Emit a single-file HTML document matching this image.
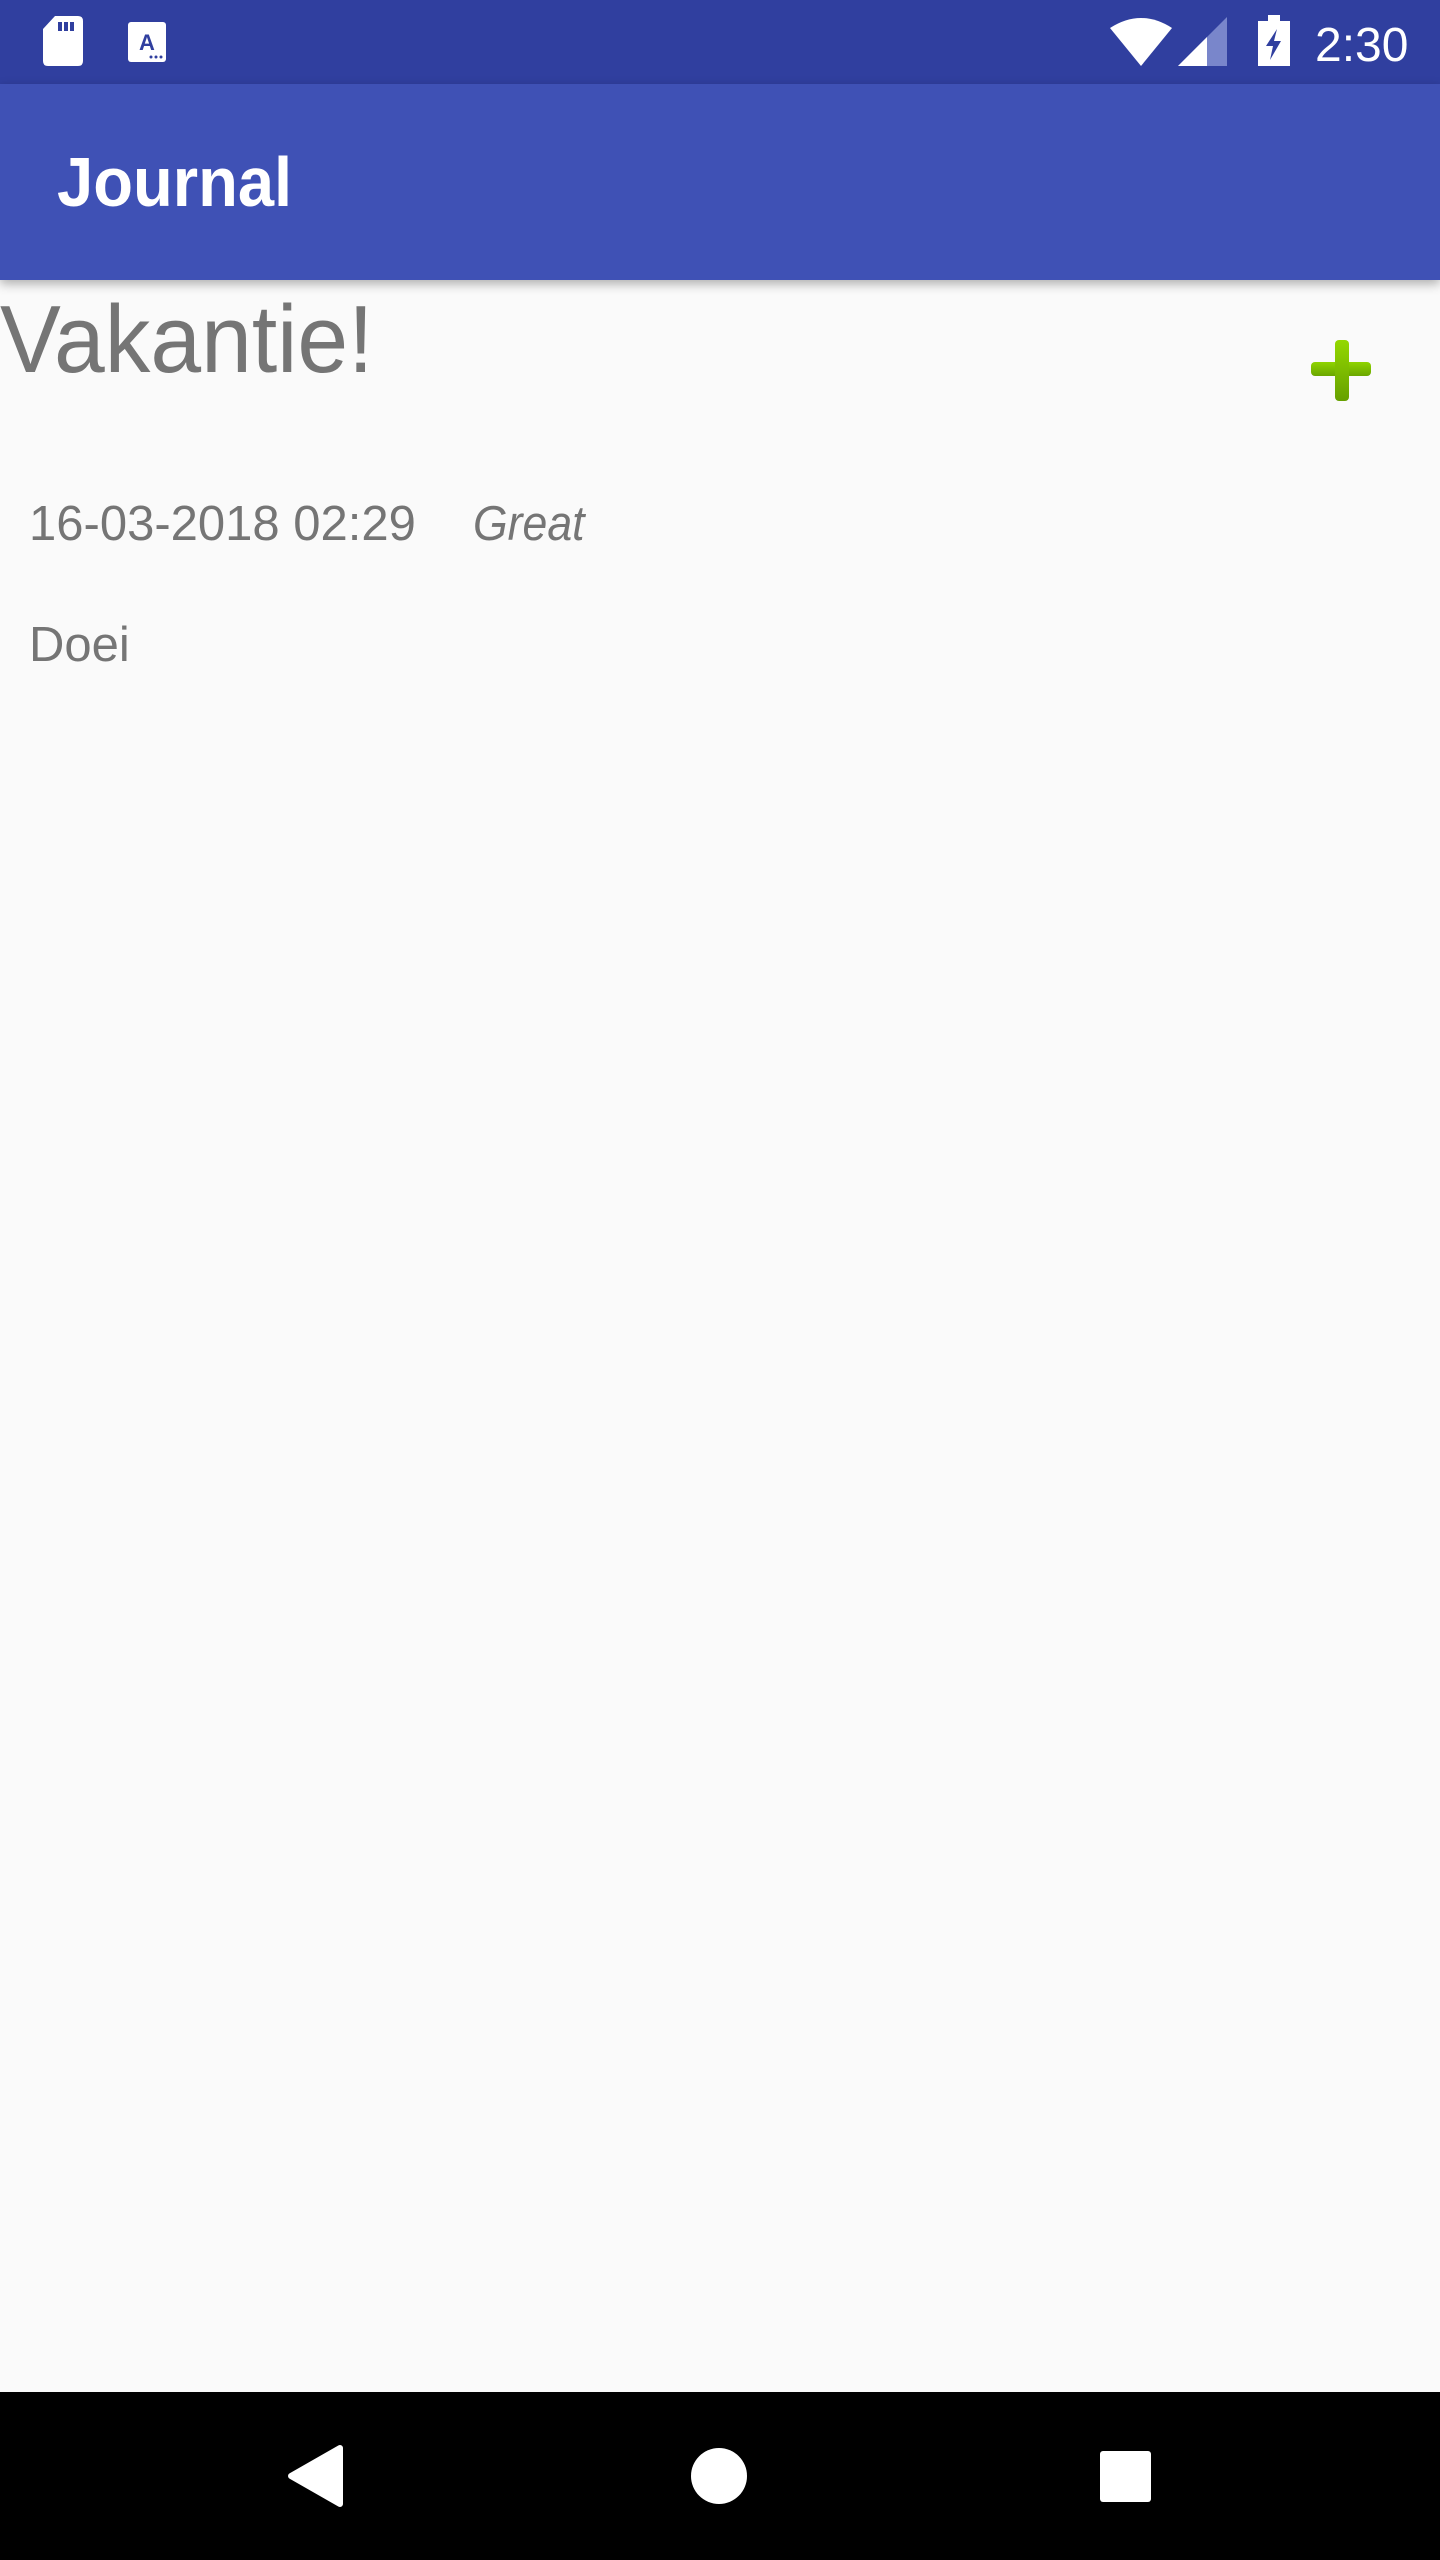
<!DOCTYPE html>
<html><head><meta charset="utf-8"><style>
*{margin:0;padding:0;box-sizing:border-box}
body{width:1440px;height:2560px;background:#fafafa;position:relative;overflow:hidden;font-family:"Liberation Sans",sans-serif}
.sb{position:absolute;left:0;top:0;width:1440px;height:84px;background:#303f9f}
.ab{position:absolute;left:0;top:84px;width:1440px;height:196px;background:#3f51b5;box-shadow:0 4px 10px rgba(0,0,0,.3)}
.ab span{position:absolute;left:57px;top:58px;font-size:70px;font-weight:bold;color:#fff;line-height:80px;transform:scaleX(.93);transform-origin:left}
.t{position:absolute;color:#757575;white-space:nowrap}
.nav{position:absolute;left:0;top:2392px;width:1440px;height:168px;background:#000}
</style></head><body>
<div class="sb">
<svg width="1440" height="84" style="position:absolute;left:0;top:0">
<path d="M55 16H78Q83 16 83 21V61Q83 66 78 66H48Q43 66 43 61V29Z" fill="#fff"/>
<rect x="58" y="22" width="4" height="9" fill="#303f9f"/><rect x="64" y="22" width="4" height="9" fill="#303f9f"/><rect x="70" y="22" width="4" height="9" fill="#303f9f"/>
<rect x="128" y="22" width="38" height="40" rx="3" fill="#fff"/>
<text x="147" y="50" font-family="Liberation Sans" font-weight="bold" font-size="22" fill="#303f9f" text-anchor="middle">A</text>
<circle cx="151" cy="57" r="1.5" fill="#303f9f"/><circle cx="156" cy="57" r="1.5" fill="#303f9f"/><circle cx="161" cy="57" r="1.5" fill="#303f9f"/>
<path d="M1110 28Q1141 8 1172 28L1141 66Z" fill="#fff"/>
<path d="M1227 17V66H1178Z" fill="#7986cb"/>
<path d="M1207 37V66H1178Z" fill="#fff"/>
<rect x="1258" y="21" width="32" height="45" fill="#fff"/><rect x="1268" y="15" width="12" height="7" fill="#fff"/>
<path d="M1277 29L1266 46H1273L1270 60L1281 41H1274Z" fill="#303f9f"/>
<text x="1315" y="61" font-family="Liberation Sans" font-size="48" fill="#fff">2:30</text>
</svg>
</div>
<div class="ab"><span>Journal</span></div>
<div class="t" style="left:0;top:290px;font-size:96px;line-height:100px;transform:scaleX(.95);transform-origin:left">Vakantie!</div>
<div style="position:absolute;left:1311px;top:362px;width:60px;height:14px;border-radius:4px;background:linear-gradient(#8fd400,#6aa600)"></div>
<div style="position:absolute;left:1335px;top:340px;width:14px;height:61px;border-radius:4px;background:linear-gradient(#94d800,#66a000)"></div>
<div class="t" style="left:29px;top:496px;font-size:49px;line-height:56px">16-03-2018 02:29</div>
<div class="t" style="left:473px;top:496px;font-size:49px;line-height:56px;font-style:italic;transform:scaleX(.91);transform-origin:left">Great</div>
<div class="t" style="left:29px;top:617px;font-size:49px;line-height:56px">Doei</div>
<div class="nav">
<svg width="1440" height="168" style="position:absolute;left:0;top:0">
<path d="M340 56V112L291 84Z" fill="#fff" stroke="#fff" stroke-width="6" stroke-linejoin="round"/>
<circle cx="719" cy="84" r="28" fill="#fff"/>
<rect x="1100" y="59" width="51" height="51" rx="3" fill="#fff"/>
</svg>
</div>
</body></html>
